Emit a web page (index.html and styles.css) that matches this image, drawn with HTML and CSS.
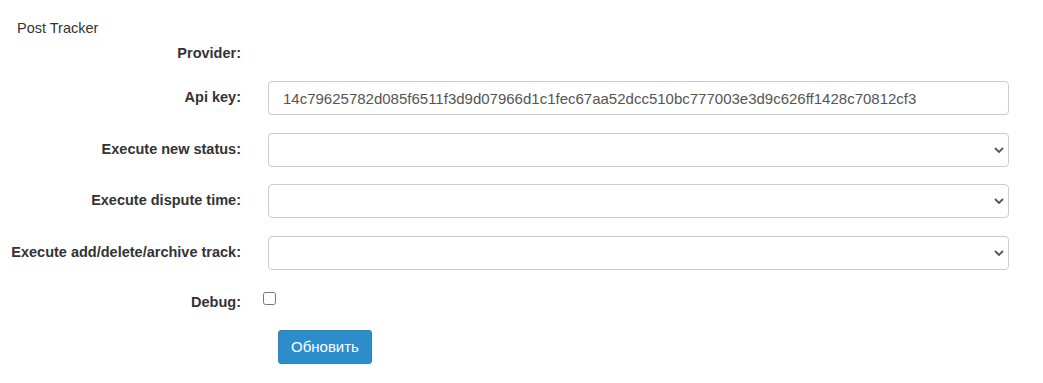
FILE: index.html
```html
<!DOCTYPE html>
<html lang="ru">
<head>
  <meta charset="UTF-8" />
  <title>Post Tracker</title>
  <meta name="viewport" content="width=device-width, initial-scale=1.0" />
  <link rel="stylesheet" href="styles.css">
</head>
<body>
  <div class="box">
    <h3 class="box-title">Post Tracker</h3>

    <form class="form-horizontal">
      <div class="form-group static">
        <label class="control-label">Provider:</label>
        <div class="control"></div>
      </div>

      <div class="form-group">
        <label class="control-label" for="api_key">Api key:</label>
        <div class="control">
          <input type="text" id="api_key" class="form-control" value="14c79625782d085f6511f3d9d07966d1c1fec67aa52dcc510bc777003e3d9c626ff1428c70812cf3" />
        </div>
      </div>

      <div class="form-group">
        <label class="control-label" for="new_status">Execute new status:</label>
        <div class="control select-wrap">
          <select id="new_status" class="form-control"><option></option></select>
          <svg class="chevron" width="10" height="6" viewBox="0 0 10 6"><path d="M1 1 L5 5 L9 1" fill="none" stroke="#555" stroke-width="1.8"/></svg>
        </div>
      </div>

      <div class="form-group">
        <label class="control-label" for="dispute_time">Execute dispute time:</label>
        <div class="control select-wrap">
          <select id="dispute_time" class="form-control"><option></option></select>
          <svg class="chevron" width="10" height="6" viewBox="0 0 10 6"><path d="M1 1 L5 5 L9 1" fill="none" stroke="#555" stroke-width="1.8"/></svg>
        </div>
      </div>

      <div class="form-group">
        <label class="control-label" for="track_ops">Execute add/delete/archive track:</label>
        <div class="control select-wrap">
          <select id="track_ops" class="form-control"><option></option></select>
          <svg class="chevron" width="10" height="6" viewBox="0 0 10 6"><path d="M1 1 L5 5 L9 1" fill="none" stroke="#555" stroke-width="1.8"/></svg>
        </div>
      </div>

      <div class="form-group debug">
        <label class="control-label" for="debug">Debug:</label>
        <div class="control">
          <input type="checkbox" id="debug" class="checkbox" />
        </div>
      </div>

      <div class="form-actions">
        <button type="submit" class="btn-primary">Обновить</button>
      </div>
    </form>
  </div>
</body>
</html>
```

FILE: styles.css
```css
html, body {
  margin: 0;
  padding: 0;
  background: #fff;
  font-family: 'Liberation Sans', Arial, sans-serif;
  font-size: 14.5px;
  line-height: 20px;
  color: #333;
}

*, *::before, *::after {
  box-sizing: border-box;
}

.box {
  padding: 18px 0 0 0;
}

.box-title {
  margin: 0 0 5px 17px;
  font-size: 14.5px;
  font-weight: normal;
  line-height: 20px;
  color: #333;
}

.form-horizontal {
  margin: 0;
}

.form-group {
  display: flex;
  align-items: flex-start;
  margin-bottom: 17.5px;
}

.form-group.static {
  margin-bottom: 18px;
}

.control-label {
  width: 241px;
  flex: none;
  text-align: right;
  font-weight: bold;
  padding-top: 6px;
  line-height: 20px;
}

.static .control-label {
  padding-top: 0;
}

.control {
  width: 741px;
  margin-left: 27px;
  flex: none;
}

.form-control {
  display: block;
  width: 100%;
  height: 34px;
  padding: 6px 14px;
  font-family: 'Liberation Sans', Arial, sans-serif;
  font-size: 15px;
  line-height: 20px;
  color: #555;
  background: #fff;
  border: 1px solid #ccc;
  border-radius: 4px;
  outline: none;
}

.select-wrap {
  position: relative;
}

select.form-control {
  appearance: none;
  -webkit-appearance: none;
}

.chevron {
  position: absolute;
  right: 5px;
  top: 14px;
}

.form-group.debug {
  margin-top: -3.5px;
  margin-bottom: 18px;
}

.debug .control-label {
  padding-top: 8px;
}

.checkbox {
  display: block;
  width: 13px;
  height: 13px;
  margin: 8px 0 0 -5px;
}

.form-actions {
  padding-left: 278px;
}

.btn-primary {
  height: 34px;
  padding: 0 12px;
  background: #2d8dcb;
  color: #fff;
  border: 1px solid #2a84bf;
  border-radius: 3px;
  font-family: 'Liberation Sans', Arial, sans-serif;
  font-size: 15px;
  cursor: pointer;
}
```
